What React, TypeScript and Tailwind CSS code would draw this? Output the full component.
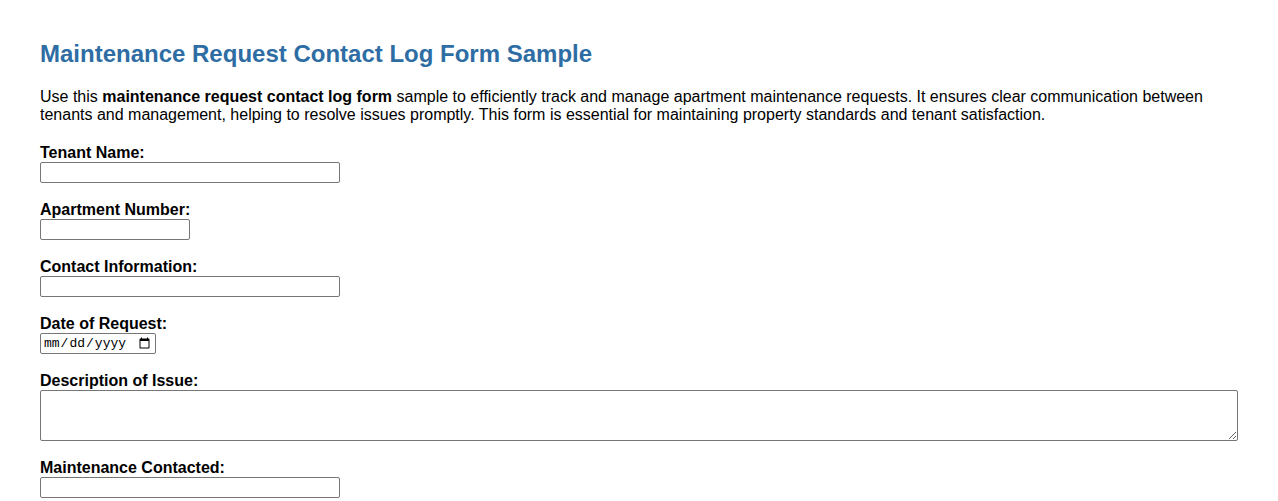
import React from 'react';

const fields: { label: string; kind: 'text' | 'short' | 'date' | 'area' }[] = [
  { label: 'Tenant Name:', kind: 'text' },
  { label: 'Apartment Number:', kind: 'short' },
  { label: 'Contact Information:', kind: 'text' },
  { label: 'Date of Request:', kind: 'date' },
  { label: 'Description of Issue:', kind: 'area' },
  { label: 'Maintenance Contacted:', kind: 'text' },
];

const boxCls = 'block border border-[#767676] rounded-[2px] bg-white px-[2px] text-[13px] outline-none';

export default function App() {
  return (
    <div className="px-10 pt-10 pb-6 bg-white text-black font-['Liberation_Sans',Arial,sans-serif]">
      <h2 className="text-[24px] leading-[28px] font-bold text-[#2e6da4]">
        Maintenance Request Contact Log Form Sample
      </h2>

      <p className="mt-5 text-[16px] leading-[18px]">
        Use this <strong>maintenance request contact log form</strong> sample to efficiently track and manage
        apartment maintenance requests. It ensures clear communication between tenants and management, helping to
        resolve issues promptly. This form is essential for maintaining property standards and tenant satisfaction.
      </p>

      <form className="mt-[19px]">
        {fields.map((f) => (
          <div key={f.label} className="mb-[17px]">
            <label className="block text-[16px] leading-[19px] font-bold">{f.label}</label>
            {f.kind === 'text' && <input type="text" className={`${boxCls} w-[300px] h-[21px]`} />}
            {f.kind === 'short' && <input type="text" className={`${boxCls} w-[150px] h-[21px]`} />}
            {f.kind === 'date' && <input type="date" className={`${boxCls} w-[116px] h-[21px] font-['Liberation_Mono',monospace]`} />}
            {f.kind === 'area' && <textarea className={`${boxCls} w-full h-[51px]`} />}
          </div>
        ))}
      </form>
    </div>
  );
}
